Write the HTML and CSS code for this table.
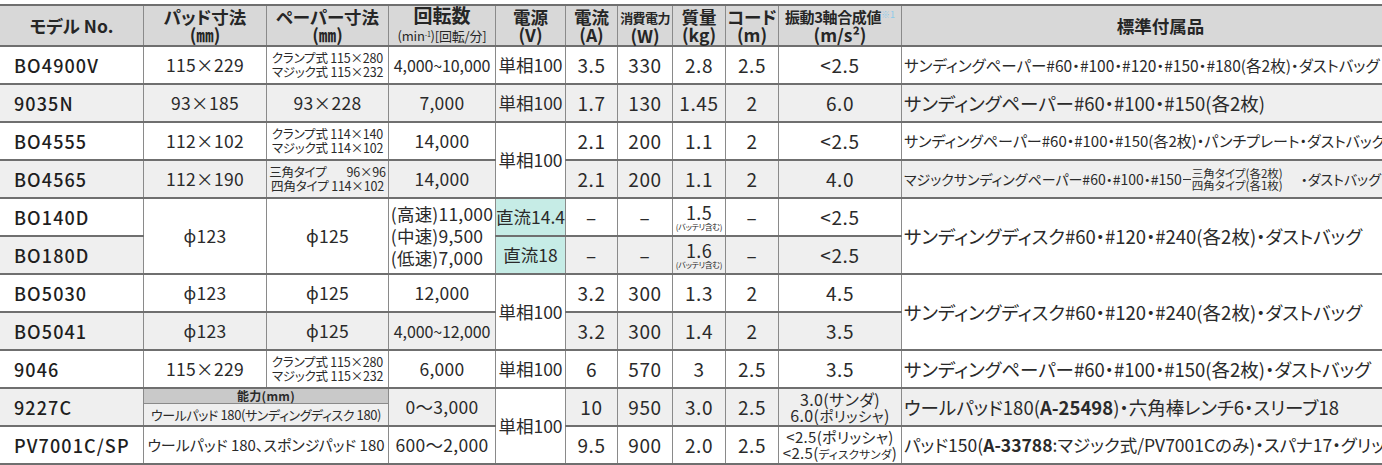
FILE: index.html
```html
<!DOCTYPE html>
<html lang="ja">
<head>
<meta charset="utf-8">
<title>仕様表</title>
<link rel="stylesheet" href="styles.css">
</head>
<body>
<div class="wrap">
<table class="spec">
<colgroup>
<col class="w-model"><col class="w-pad"><col class="w-paper"><col class="w-rpm"><col class="w-pow"><col class="w-amp"><col class="w-watt"><col class="w-kg"><col class="w-cord"><col class="w-vib"><col class="w-acc">
</colgroup>
<thead>
<tr>
<th>モデル No.</th>
<th>パッド寸法<br>(㎜)</th>
<th>ペーパー寸法<br>(㎜)</th>
<th><span class="h-big">回転数</span><br><span class="h-sm">(min<sup>-1</sup>)[回転/分]</span></th>
<th>電源<br>(V)</th>
<th>電流<br>(A)</th>
<th><span class="h-cond">消費電力</span><br>(W)</th>
<th>質量<br>(kg)</th>
<th>コード<br>(m)</th>
<th><span class="h-vib">振動3軸合成値</span><span class="note">※1</span><br>(m/s²)</th>
<th>標準付属品</th>
</tr>
</thead>
<tbody>
<tr class="rw">
<td class="model">BO4900V</td>
<td>115×229</td>
<td class="two">クランプ式 115×280<br>マジック式 115×232</td>
<td class="rpm-sm">4,000~10,000</td>
<td class="pw">単相100</td>
<td class="num">3.5</td><td class="num">330</td><td class="num">2.8</td><td class="num">2.5</td><td class="num">&lt;2.5</td>
<td class="acc acc-s">サンディングペーパー#60・#100・#120・#150・#180(各2枚)・ダストバッグ</td>
</tr>
<tr class="rg">
<td class="model">9035N</td>
<td>93×185</td>
<td>93×228</td>
<td>7,000</td>
<td class="pw">単相100</td>
<td class="num">1.7</td><td class="num">130</td><td class="num">1.45</td><td class="num">2</td><td class="num">6.0</td>
<td class="acc">サンディングペーパー#60・#100・#150(各2枚)</td>
</tr>
<tr class="rw">
<td class="model">BO4555</td>
<td>112×102</td>
<td class="two">クランプ式 114×140<br>マジック式 114×102</td>
<td>14,000</td>
<td class="pw cw" rowspan="2">単相100</td>
<td class="num">2.1</td><td class="num">200</td><td class="num">1.1</td><td class="num">2</td><td class="num">&lt;2.5</td>
<td class="acc acc-s2">サンディングペーパー#60・#100・#150(各2枚)・パンチプレート・ダストバッグ</td>
</tr>
<tr class="rg">
<td class="model">BO4565</td>
<td>112×190</td>
<td class="two">三角タイプ<span class="gap"></span>96×96<br>四角タイプ 114×102</td>
<td>14,000</td>
<td class="num">2.1</td><td class="num">200</td><td class="num">1.1</td><td class="num">2</td><td class="num">4.0</td>
<td class="acc acc-xs"><span class="acc-line">マジックサンディングペーパー#60・#100・#150<span class="dash"></span><span class="stack">三角タイプ(各2枚)<br>四角タイプ(各1枚)</span><span class="tail">・ダストバッグ</span></span></td>
</tr>
<tr class="rw">
<td class="model">BO140D</td>
<td class="cw" rowspan="2">ϕ123</td>
<td class="cw" rowspan="2">ϕ125</td>
<td class="cw" rowspan="2"><span class="rpm-list">(高速)11,000<br>(中速)9,500<br>(低速)7,000</span></td>
<td class="pw dc">直流14.4</td>
<td class="num">–</td><td class="num">–</td>
<td class="bat"><span class="bat-n">1.5</span><span class="bat-sm">(バッテリ含む)</span></td>
<td class="num">–</td><td class="num">&lt;2.5</td>
<td class="acc cw" rowspan="2">サンディングディスク#60・#120・#240(各2枚)・ダストバッグ</td>
</tr>
<tr class="rg">
<td class="model">BO180D</td>
<td class="pw dc">直流18</td>
<td class="num">–</td><td class="num">–</td>
<td class="bat"><span class="bat-n">1.6</span><span class="bat-sm">(バッテリ含む)</span></td>
<td class="num">–</td><td class="num">&lt;2.5</td>
</tr>
<tr class="rw">
<td class="model">BO5030</td>
<td>ϕ123</td>
<td>ϕ125</td>
<td>12,000</td>
<td class="pw cw" rowspan="2">単相100</td>
<td class="num">3.2</td><td class="num">300</td><td class="num">1.3</td><td class="num">2</td><td class="num">4.5</td>
<td class="acc cw" rowspan="2">サンディングディスク#60・#120・#240(各2枚)・ダストバッグ</td>
</tr>
<tr class="rg">
<td class="model">BO5041</td>
<td>ϕ123</td>
<td>ϕ125</td>
<td class="rpm-sm">4,000~12,000</td>
<td class="num">3.2</td><td class="num">300</td><td class="num">1.4</td><td class="num">2</td><td class="num">3.5</td>
</tr>
<tr class="rw">
<td class="model">9046</td>
<td>115×229</td>
<td class="two">クランプ式 115×280<br>マジック式 115×232</td>
<td>6,000</td>
<td class="pw">単相100</td>
<td class="num">6</td><td class="num">570</td><td class="num">3</td><td class="num">2.5</td><td class="num">3.5</td>
<td class="acc">サンディングペーパー#60・#100・#150(各2枚)・ダストバッグ</td>
</tr>
<tr class="rg">
<td class="model">9227C</td>
<td class="cap" colspan="2"><div class="cap-h">能力(mm)</div><div class="cap-b">ウールパッド 180(サンディングディスク 180)</div></td>
<td>0〜3,000</td>
<td class="pw cw" rowspan="2">単相100</td>
<td class="num">10</td><td class="num">950</td><td class="num">3.0</td><td class="num">2.5</td>
<td class="vib2">3.0(サンダ)<br>6.0(<span class="vsm">ポリッシャ</span>)</td>
<td class="acc">ウールパッド180(<b>A-25498</b>)・六角棒レンチ6・スリーブ18</td>
</tr>
<tr class="rw">
<td class="model">PV7001C/SP</td>
<td class="wide" colspan="2">ウールパッド 180、スポンジパッド 180</td>
<td>600〜2,000</td>
<td class="num">9.5</td><td class="num">900</td><td class="num">2.0</td><td class="num">2.5</td>
<td class="vib3">&lt;2.5(ポリッシャ)<br>&lt;2.5(<span class="tiny">ディスクサンダ</span>)</td>
<td class="acc acc-m">パッド150(<b>A-33788</b>:マジック式/PV7001Cのみ)・スパナ17・グリップ</td>
</tr>
</tbody>
</table>
</div>
</body>
</html>
```
FILE: styles.css
```css
html, body {
  margin: 0;
  padding: 0;
  background: #ffffff;
  overflow: hidden;
}
.wrap {
  padding-top: 4px;
  width: 1382px;
  height: 461px;
  overflow: hidden;
}
.spec {
  border-collapse: collapse;
  table-layout: fixed;
  width: 1420px;
  margin-left: -1px;
  font-family: "Noto Sans CJK JP", "Noto Sans", sans-serif;
  font-feature-settings: "palt";
  color: #2a2a2a;
}
.w-model { width: 144px; }
.w-pad { width: 123px; }
.w-paper { width: 122px; }
.w-rpm { width: 107px; }
.w-pow { width: 70px; }
.w-amp { width: 52px; }
.w-watt { width: 55px; }
.w-kg { width: 53px; }
.w-cord { width: 53px; }
.w-vib { width: 123px; }
.w-acc { width: 518px; }

.spec th, .spec td {
  border-left: 1px solid #8a8a8a;
  border-right: 1px solid #8a8a8a;
  border-top: 2px solid #6f6f6f;
  border-bottom: 2px solid #6f6f6f;
  padding: 0;
  text-align: center;
  vertical-align: middle;
  white-space: nowrap;
}
.spec td {
  overflow: hidden;
}
.spec thead th {
  background: #d8d8d8;
  height: 38px;
  font-size: 17.5px;
  line-height: 18px;
  font-weight: 700;
  color: #262626;
}
.h-big {
  font-size: 19px;
}
.h-sm {
  font-size: 13px;
  font-weight: 400;
  letter-spacing: -0.2px;
}
.h-sm sup {
  font-size: 7px;
  vertical-align: 4px;
  line-height: 0;
}
.h-cond {
  font-size: 13px;
  letter-spacing: -0.6px;
}
.h-vib {
  font-size: 15px;
  letter-spacing: -0.4px;
}
.note {
  font-size: 9px;
  color: #8ccbeb;
  vertical-align: 5px;
  line-height: 0;
  font-weight: 400;
}
.spec tbody td {
  height: 36px;
  font-size: 17.5px;
  line-height: 20px;
  font-weight: 400;
  letter-spacing: 0.3px;
}
.spec tbody td.num {
  font-size: 19px;
  letter-spacing: 0.6px;
}
.rw td { background: #ffffff; }
.rg td { background: #efefef; }
.spec td.cw { background: #ffffff; }
.spec td.model {
  text-align: left;
  padding-left: 14px;
  font-size: 18px;
  font-weight: 500;
  letter-spacing: 1.1px;
  color: #1e1e1e;
}
.spec td.two {
  font-size: 12.5px;
  line-height: 14px;
  letter-spacing: -0.2px;
}
.gap {
  display: inline-block;
  width: 20px;
}
.spec td.rpm-sm {
  font-size: 16px;
  letter-spacing: -0.1px;
}
.spec td.pw {
  font-size: 17.5px;
  letter-spacing: 0;
}
.spec td.dc {
  background: #c6ece6;
}
.spec td.bat {
  overflow: visible;
}
.bat-n {
  display: block;
  font-size: 18px;
  line-height: 19px;
}
.bat-sm {
  display: block;
  font-size: 8px;
  line-height: 10px;
  letter-spacing: -0.3px;
}
.rpm-list {
  display: inline-block;
  text-align: left;
  font-size: 17.5px;
  line-height: 22px;
  letter-spacing: 0.2px;
}
.spec td.acc {
  text-align: left;
  padding-left: 2px;
  font-size: 18.5px;
  letter-spacing: 0;
}
.spec td.acc-s {
  font-size: 15.5px;
}
.spec td.acc-s2 {
  font-size: 15px;
}
.spec td.acc-m {
  font-size: 17.5px;
}
.spec td.acc-xs {
  font-size: 14px;
}
.acc-line {
  display: inline-flex;
  align-items: center;
}
.dash {
  display: inline-block;
  width: 8px;
  height: 1px;
  background: #333;
  margin: 0 1px;
}
.stack {
  display: inline-block;
  font-size: 11.5px;
  line-height: 12px;
  text-align: center;
}
.tail {
  margin-left: 18px;
}
.spec td.cap {
  padding: 0;
  vertical-align: top;
}
.cap-h {
  background: #c9c9c9;
  font-size: 12px;
  line-height: 14px;
  font-weight: 700;
  border-bottom: 1px solid #8a8a8a;
}
.cap-b {
  font-size: 13px;
  line-height: 21px;
  letter-spacing: -0.4px;
}
.spec td.wide {
  font-size: 15px;
  letter-spacing: 0;
}
.spec td.vib2 {
  font-size: 16px;
  line-height: 16px;
  letter-spacing: 0.4px;
}
.vsm {
  font-size: 14.5px;
}
.spec td.vib3 {
  font-size: 15px;
  line-height: 16px;
  letter-spacing: 0.3px;
}
.tiny {
  font-size: 11.5px;
}
.acc b {
  font-weight: 700;
}
```
